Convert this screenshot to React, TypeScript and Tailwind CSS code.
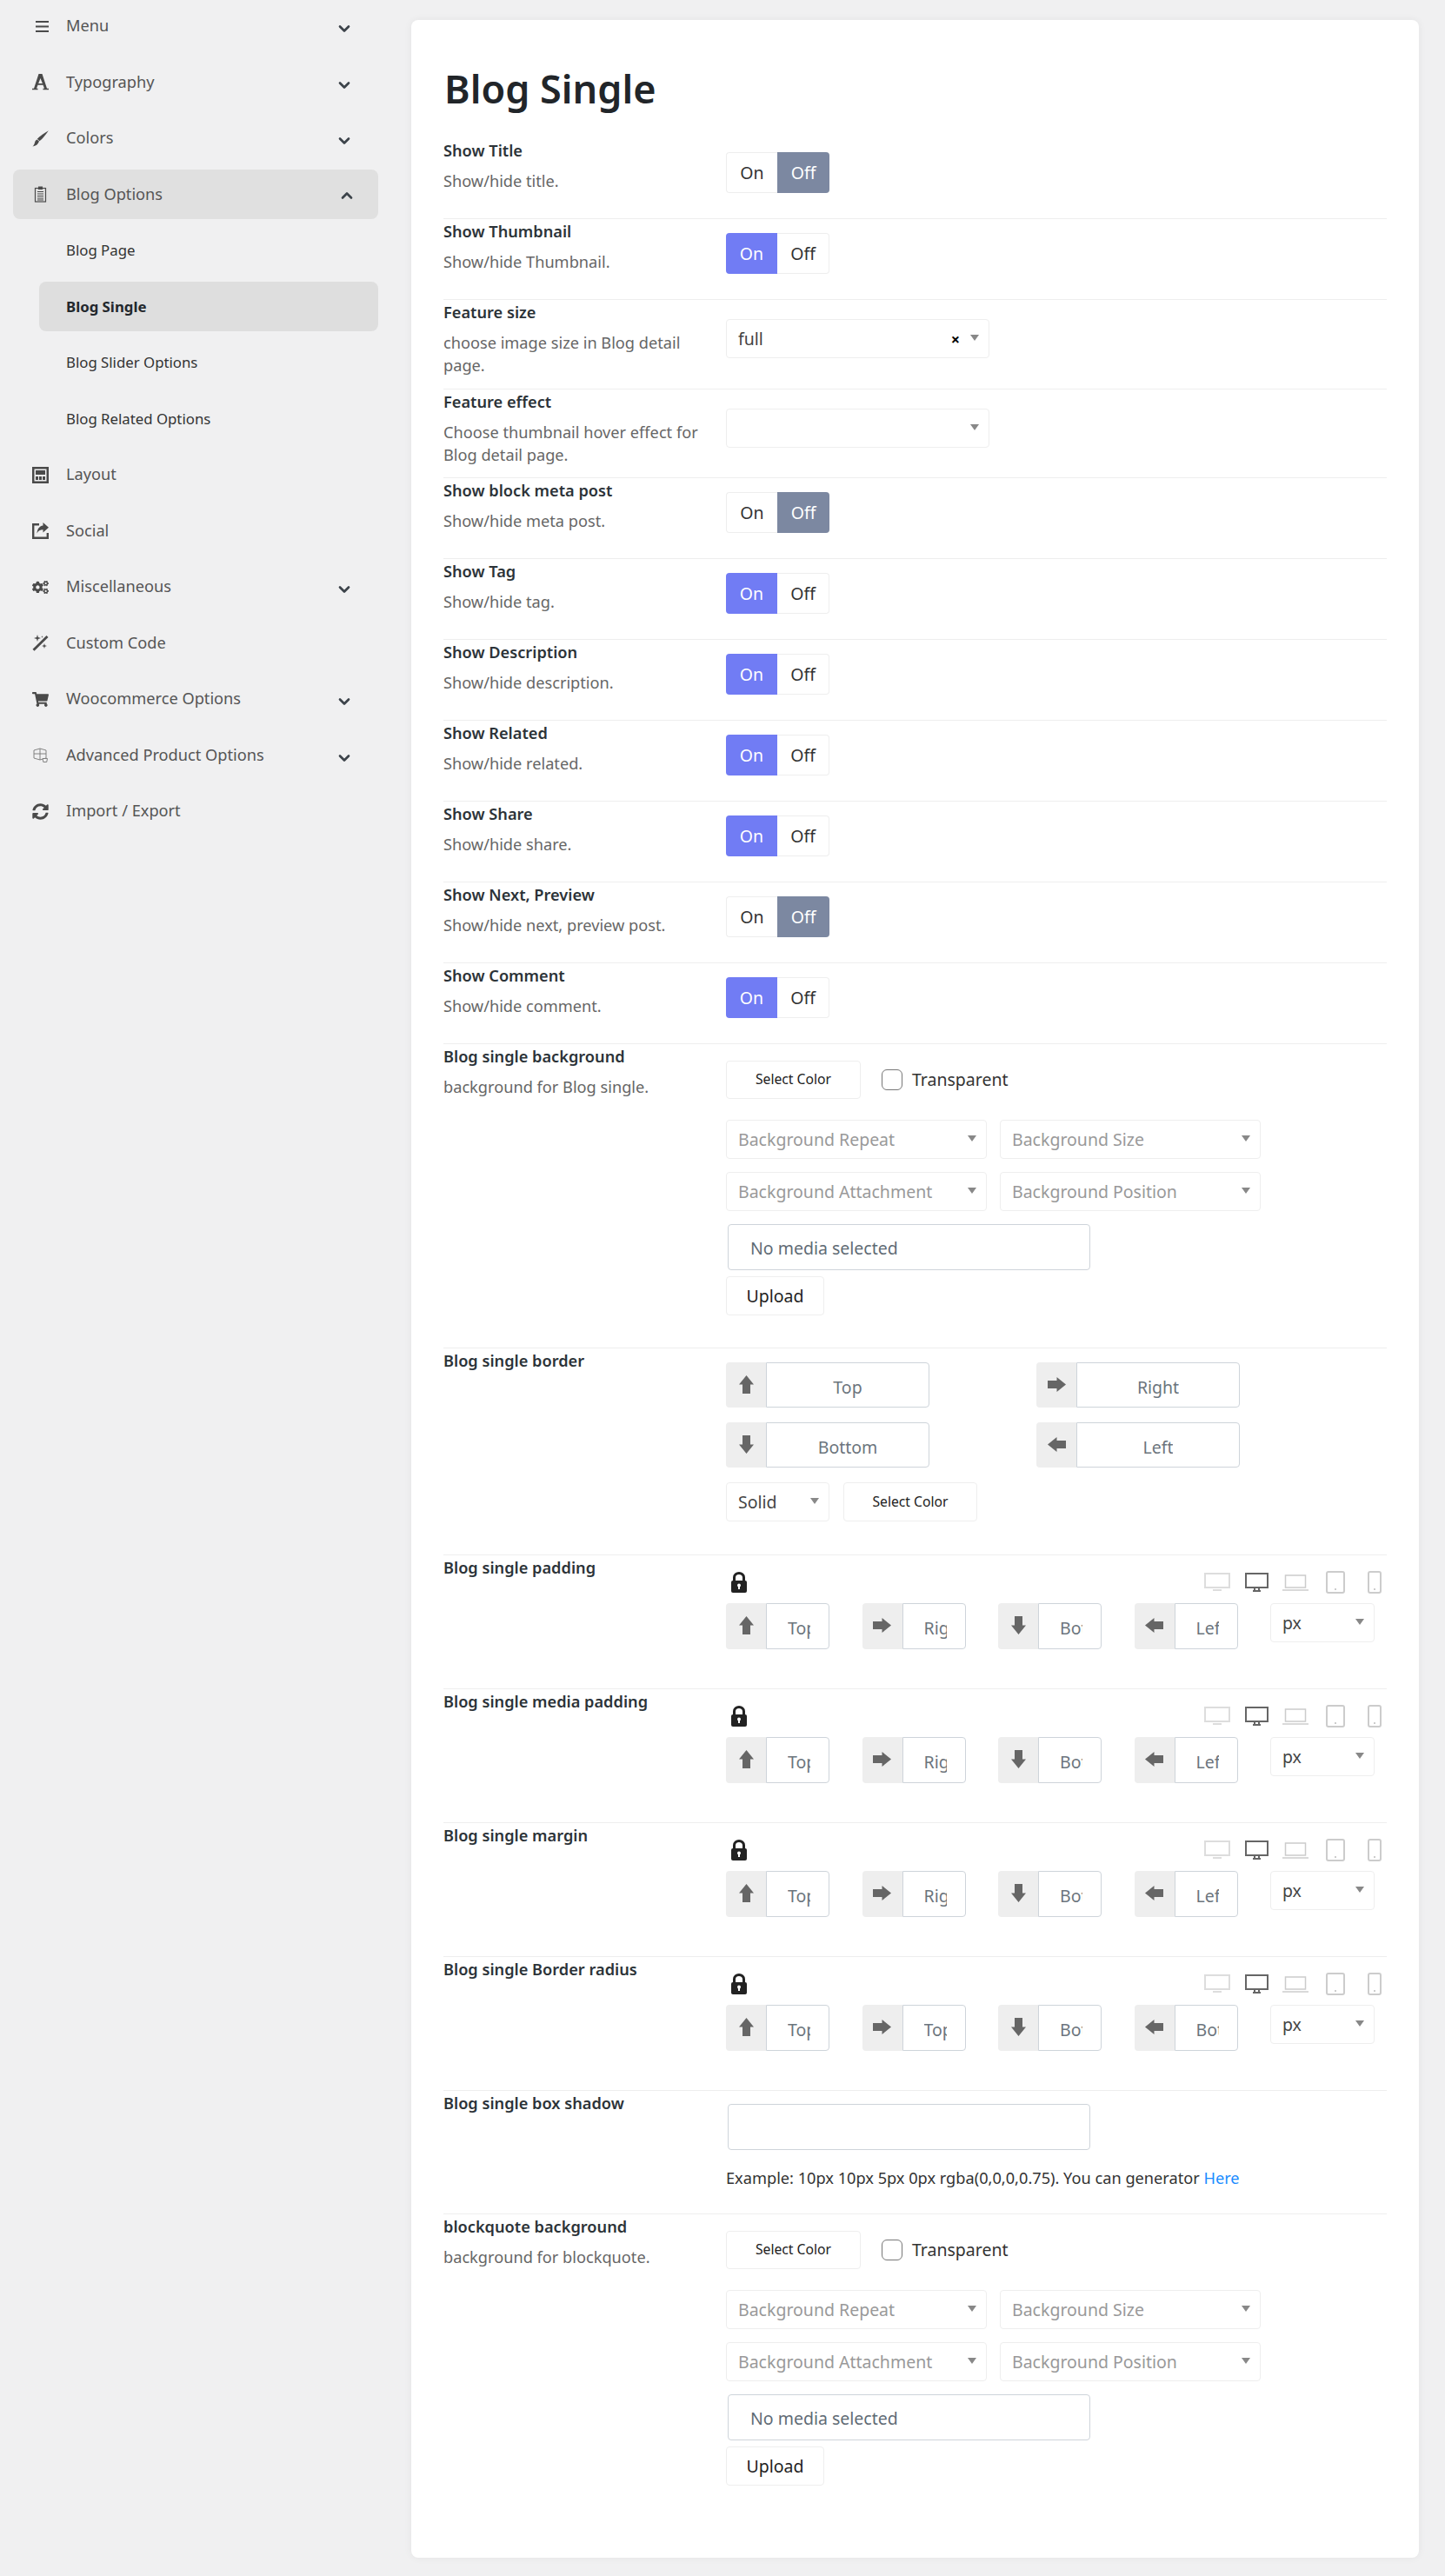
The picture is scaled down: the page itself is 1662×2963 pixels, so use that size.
import { ChevronDown, ChevronUp } from "lucide-react";
import { FaCogs, FaShoppingCart, FaSyncAlt } from "react-icons/fa";

const iconClass = "h-[19px] w-[19px] text-[#4a4a4a]";

const BarsIcon = () => (
  <svg viewBox="0 0 19 19" className={iconClass} fill="currentColor">
    <rect x="4" y="3" width="16" height="2" />
    <rect x="4" y="8.5" width="16" height="2" />
    <rect x="4" y="14" width="16" height="2" />
  </svg>
);

const FontIcon = () => (
  <svg viewBox="0 0 19 19" className={iconClass} fill="currentColor">
    <path
      fillRule="evenodd"
      d="M7.500 0h4L17 16.800h2v1.400h-6.500v-1.400h1.500l-1.500-4H6.500l-1.500 4h1.500v1.400H0v-1.400h2zM9.500 5 7.200 10.900h4.700z"
    />
  </svg>
);

const BrushIcon = () => (
  <svg viewBox="0 0 19 19" className={iconClass} fill="currentColor">
    <path d="M18.800.2C15.500 5 12 9.500 8.500 12.300L5.800 9.800C9 6.500 14 3 18.800.2z" />
    <path d="M5.500 10.500l2.500 2C7 16 4 18 .5 18.500 2 17 2.500 15.500 3 14c.3-2 1.500-3 2.500-3.500z" />
  </svg>
);

const ClipboardIcon = () => (
  <svg viewBox="0 0 19 19" className={iconClass} fill="none" stroke="currentColor">
    <rect x="3.500" y="2.500" width="12" height="15.500" strokeWidth="1.200" />
    <rect x="7" y="0.500" width="5" height="3.500" fill="currentColor" stroke="none" />
    <path d="M6 6.500h7M6 9h7M6 11.500h7M6 14h7M6 16h7" strokeWidth="1.100" />
  </svg>
);

const LayoutIcon = () => (
  <svg viewBox="0 0 19 19" className={iconClass} fill="currentColor">
    <path d="M0 0h19v19H0zM2.500 2.500v14h14v-14z" fillRule="evenodd" />
    <rect x="4" y="4" width="11" height="5" />
    <rect x="4" y="11" width="3" height="4" />
    <rect x="8" y="11" width="3" height="4" />
    <rect x="12" y="11" width="3" height="4" />
  </svg>
);

const ShareIcon = () => (
  <svg viewBox="0 0 19 19" className={iconClass} fill="currentColor">
    <path d="M0 1h8v2.400H2.400v13.200h14.200V12H19v7H0z" />
    <path d="M12.500 0 19 5.800l-6.500 5.800V8.200c-3.300 0-5.600 1.200-7 4.300C5.800 8 8 4.200 12.500 3.600z" />
  </svg>
);

const WandIcon = () => (
  <svg viewBox="0 0 19 19" className={iconClass} fill="currentColor">
    <path d="M16.500 1 18.500 3 2.500 18.800.5 16.800z" />
    <path d="M6 0l.9 3.100L10 4l-3.100.9L6 8l-.9-3.100L2 4l3.100-.9zM14 10l.7 2.300L17 13l-2.300.7L14 16l-.7-2.300L11 13l2.300-.7zM11.500 1l.3 1.200L13 2.500l-1.200.3-.3 1.200-.3-1.200L10 2.500l1.200-.3z" />
  </svg>
);

const BoxIcon = () => (
  <svg viewBox="0 0 19 19" className={iconClass} fill="none" stroke="#777" strokeWidth="0.9">
    <path d="M2 4 9 2l7 2v9l-7 2-7-2zM2 8h14M9 2v13" />
    <path d="M12 13.500h5.500l-.8 4h-3.900z" fill="#f0f0f1" />
  </svg>
);

const LockIcon = () => (
  <svg viewBox="0 0 18 24" className="ml-[6px] h-[24px] w-[18px]">
    <path d="M3.500 11V6.500a5.500 5 0 0 1 11 0V11" fill="none" stroke="#222" strokeWidth="3" />
    <rect y="10" width="18" height="14" rx="2" fill="#222" />
    <circle cx="9" cy="15.500" r="2" fill="#fff" />
    <rect x="8" y="16" width="2" height="4" fill="#fff" />
  </svg>
);

const icons: Record<string, React.ReactNode> = {
  Menu: <BarsIcon />,
  Typography: <FontIcon />,
  Colors: <BrushIcon />,
  "Blog Options": <ClipboardIcon />,
  Layout: <LayoutIcon />,
  Social: <ShareIcon />,
  Miscellaneous: <FaCogs className={iconClass} />,
  "Custom Code": <WandIcon />,
  "Woocommerce Options": <FaShoppingCart className={iconClass} />,
  "Advanced Product Options": <BoxIcon />,
  "Import / Export": <FaSyncAlt className={iconClass} />,
};

const menu = [
  { name: "Menu", arrow: true },
  { name: "Typography", arrow: true },
  { name: "Colors", arrow: true },
  { name: "Blog Options", open: true },
  { name: "Layout" },
  { name: "Social" },
  { name: "Miscellaneous", arrow: true },
  { name: "Custom Code" },
  { name: "Woocommerce Options", arrow: true },
  { name: "Advanced Product Options", arrow: true },
  { name: "Import / Export" },
];

const subMenu = ["Blog Page", "Blog Single", "Blog Slider Options", "Blog Related Options"];

const Sidebar = () => (
  <aside className="w-[473px] shrink-0 pl-[15px] pr-[38px] pt-[1.5px] text-[18.2px] text-[#555]">
    <div className="flex flex-col gap-[7.5px]">
      {menu.map((m) => (
        <div key={m.name} className="flex flex-col gap-[7.5px]">
          <div className={`flex h-[57px] items-center rounded-lg pl-[22px] ${m.open ? "bg-[#e0e0e0]" : ""}`}>
            <span className="w-[39px]">{icons[m.name]}</span>
            <span className="flex-1">{m.name}</span>
            {m.arrow && <ChevronDown className="mr-[29px] mt-[6px] h-[20px] w-[20px] text-[#3c434a]" strokeWidth={3.2} />}
            {m.open && <ChevronUp className="mr-[26px] mt-[3px] h-[20px] w-[20px] text-[#3c434a]" strokeWidth={3.2} />}
          </div>
          {m.open &&
            subMenu.map((s) => (
              <div
                key={s}
                className={`ml-[30px] flex h-[57px] items-center rounded-lg pl-[31px] text-[16.8px] ${s === "Blog Single" ? "bg-[#dedede] font-bold text-[#23282d]" : "text-[#333]"}`}
              >
                {s}
              </div>
            ))}
        </div>
      ))}
    </div>
  </aside>
);

const Caret = () => <span className="-mt-[3px] h-0 w-0 shrink-0 border-x-[5.5px] border-t-[7px] border-x-transparent border-t-[#888]" />;

const Toggle = ({ on }: { on: boolean }) => (
  <div className="flex h-[47px] w-[119px] text-[19.5px]">
    <div className={`flex w-[59px] items-center justify-center rounded-l ${on ? "bg-[#717cf4] text-white" : "border border-r-0 border-[#eee] bg-white text-[#333]"}`}>On</div>
    <div className={`flex w-[60px] items-center justify-center rounded-r ${on ? "border border-l-0 border-[#eee] bg-white text-[#333]" : "bg-[#7c88a1] text-white"}`}>Off</div>
  </div>
);

const Select = ({ value, placeholder, width, clear }: { value?: string; placeholder?: string; width: string; clear?: boolean }) => (
  <div className={`flex h-[45px] items-center rounded border border-[#eee] bg-white pl-[13px] pr-[11px] text-[19.5px] ${width}`}>
    <span className={`flex-1 whitespace-nowrap ${placeholder ? "text-[#999]" : "text-[#444]"}`}>{value || placeholder}</span>
    {clear && <span className="mr-[12px] text-[18px] font-bold leading-none text-black">×</span>}
    <Caret />
  </div>
);

const Button = ({ children, className }: { children: React.ReactNode; className: string }) => (
  <div className={`flex items-center justify-center rounded border border-[#eee] bg-white text-[#222] ${className}`}>{children}</div>
);

const Row = ({ title, desc, last, children }: { title: string; desc?: string; last?: boolean; children: React.ReactNode }) => (
  <div className={`flex ${last ? "" : "border-b border-[#eee]"}`}>
    <div className="w-[325px] shrink-0 pb-[13px] pr-[10px] pt-[2px]">
      <div className="text-[18.2px] font-semibold leading-[24px] text-[#2c3338]">{title}</div>
      {desc && <div className="mt-[11px] text-[18.2px] leading-[25.5px] text-[#666]">{desc}</div>}
    </div>
    <div className="min-w-0 flex-1">{children}</div>
  </div>
);

const ToggleRow = ({ title, desc, on }: { title: string; desc: string; on: boolean }) => (
  <Row title={title} desc={desc}>
    <div className="pb-[29px] pt-[16px]">
      <Toggle on={on} />
    </div>
  </Row>
);

const Background = ({ title, desc, last }: { title: string; desc: string; last?: boolean }) => (
  <Row title={title} desc={desc} last={last}>
    <div className="pt-[19px]">
      <div className="flex items-center">
        <Button className="h-[44px] w-[155px] text-[15.7px]">Select Color</Button>
        <span className="ml-[24px] h-[24px] w-[24px] rounded-md border border-[#777] bg-white" />
        <span className="ml-[11px] text-[19.5px] text-[#333]">Transparent</span>
      </div>
      <div className="mt-[24px] grid w-[615px] grid-cols-[300px_300px] gap-x-[15px] gap-y-[15px]">
        <Select placeholder="Background Repeat" width="w-[300px]" />
        <Select placeholder="Background Size" width="w-[300px]" />
        <Select placeholder="Background Attachment" width="w-[300px]" />
        <Select placeholder="Background Position" width="w-[300px]" />
      </div>
      <div className="ml-[2px] mt-[15px] flex h-[53px] w-[417px] items-center rounded border border-[#ced4da] bg-white pl-[25px] pt-[2px] text-[19.5px] text-[#5f6b75]">No media selected</div>
      <Button className="mt-[7px] h-[45px] w-[113px] text-[19.5px]">Upload</Button>
      <div className="h-[37px]" />
    </div>
  </Row>
);

const Arrow = ({ dir }: { dir: "up" | "down" | "left" | "right" }) => {
  const rotate = { up: "rotate-0", right: "rotate-90", down: "rotate-180", left: "-rotate-90" }[dir];
  return (
    <svg viewBox="0 0 17 21" className={`h-[21px] w-[17px] ${rotate}`} fill="#666">
      <path d="M8.500 0 17 10.500H13V21H4V10.500H0Z" />
    </svg>
  );
};

const Group = ({ dir, label, className, text }: { dir: "up" | "down" | "left" | "right"; label: string; className: string; text: string }) => (
  <div className={`flex shrink-0 ${className}`}>
    <div className="flex w-[46px] shrink-0 items-center justify-center rounded-l bg-[#eee] pb-[2px]">
      <Arrow dir={dir} />
    </div>
    <div className={`flex min-w-0 flex-1 items-center overflow-hidden rounded-r border border-[#ced4da] bg-white pt-[5px] text-[19.5px] text-[#6c757d] ${text}`}>
      <span className="overflow-hidden whitespace-nowrap">{label}</span>
    </div>
  </div>
);

const Devices = () => (
  <div className="flex items-start pr-[6px]">
    <svg viewBox="0 0 30 21" className="mt-[1px] h-[21px] w-[30px]" fill="none" stroke="#ddd" strokeWidth="2">
      <rect x="1" y="1" width="28" height="16" />
      <path d="M10 20h10" />
    </svg>
    <svg viewBox="0 0 27 22" className="ml-[17px] mt-[1px] h-[22px] w-[27px]" fill="none" stroke="#666" strokeWidth="2">
      <rect x="1" y="1" width="25" height="16" />
      <path d="M9 21h9M11 17v4M16 17v4" />
    </svg>
    <svg viewBox="0 0 30 19" className="ml-[16px] mt-[3px] h-[19px] w-[30px]" fill="none" stroke="#ccc" strokeWidth="1.500">
      <rect x="3.500" y="1" width="23" height="14" />
      <path d="M0 18h30" />
    </svg>
    <svg viewBox="0 0 22 26" className="ml-[20px] -mt-[1px] h-[26px] w-[22px]" fill="none" stroke="#ccc" strokeWidth="2">
      <rect x="1" y="1" width="20" height="24" rx="2" />
      <rect x="10" y="20" width="2" height="2" fill="#ccc" stroke="none" />
    </svg>
    <svg viewBox="0 0 16 26" className="ml-[26px] -mt-[1px] h-[26px] w-[16px]" fill="none" stroke="#ccc" strokeWidth="2">
      <rect x="1" y="1" width="14" height="24" rx="2" />
      <rect x="7" y="20" width="2" height="2" fill="#ccc" stroke="none" />
    </svg>
  </div>
);

const Spacing = ({ title, labels }: { title: string; labels: string[] }) => (
  <Row title={title}>
    <div className="pb-[45px] pt-[19px]">
      <div className="flex h-[36px] items-start justify-between">
        <LockIcon />
        <Devices />
      </div>
      <div className="flex gap-[37.5px]">
        <Group dir="up" label={labels[0]} className="h-[53px] w-[119px]" text="pl-[24px] pr-[21px]" />
        <Group dir="right" label={labels[1]} className="h-[53px] w-[119px]" text="pl-[24px] pr-[21px]" />
        <Group dir="down" label={labels[2]} className="h-[53px] w-[119px]" text="pl-[24px] pr-[21px]" />
        <Group dir="left" label={labels[3]} className="h-[53px] w-[119px]" text="pl-[24px] pr-[21px]" />
        <Select value="px" width="w-[120px]" />
      </div>
    </div>
  </Row>
);

export default function App() {
  return (
    <div className="flex min-h-[2963px] bg-[#f0f0f1] font-['Noto_Sans',sans-serif]">
      <Sidebar />
      <main className="mb-[21px] mt-[23px] w-[1159px] rounded-lg bg-white px-[37px] shadow-[0_0_10px_rgba(0,0,0,0.06)]">
        <h1 className="pb-[25px] pl-[1px] pt-[47px] text-[45px] font-semibold leading-[64px] text-[#212529]">Blog Single</h1>
        <ToggleRow title="Show Title" desc="Show/hide title." on={false} />
        <ToggleRow title="Show Thumbnail" desc="Show/hide Thumbnail." on />
        <Row title="Feature size" desc="choose image size in Blog detail page.">
          <div className="pb-[35px] pt-[22px]">
            <Select value="full" width="w-[303px]" clear />
          </div>
        </Row>
        <Row title="Feature effect" desc="Choose thumbnail hover effect for Blog detail page.">
          <div className="pt-[22px]">
            <Select width="w-[303px]" />
          </div>
        </Row>
        <ToggleRow title="Show block meta post" desc="Show/hide meta post." on={false} />
        <ToggleRow title="Show Tag" desc="Show/hide tag." on />
        <ToggleRow title="Show Description" desc="Show/hide description." on />
        <ToggleRow title="Show Related" desc="Show/hide related." on />
        <ToggleRow title="Show Share" desc="Show/hide share." on />
        <ToggleRow title="Show Next, Preview" desc="Show/hide next, preview post." on={false} />
        <ToggleRow title="Show Comment" desc="Show/hide comment." on />
        <Background title="Blog single background" desc="background for Blog single." />
        <Row title="Blog single border">
          <div className="pb-[38px] pt-[16px]">
            <div className="grid grid-cols-[234px_234px] gap-x-[123px] gap-y-[17px]">
              <Group dir="up" label="Top" className="h-[52px] w-[234px]" text="justify-center" />
              <Group dir="right" label="Right" className="h-[52px] w-[234px]" text="justify-center" />
              <Group dir="down" label="Bottom" className="h-[52px] w-[234px]" text="justify-center" />
              <Group dir="left" label="Left" className="h-[52px] w-[234px]" text="justify-center" />
            </div>
            <div className="mt-[17px] flex gap-[16px]">
              <Select value="Solid" width="w-[119px]" />
              <Button className="h-[45px] w-[154px] text-[15.7px]">Select Color</Button>
            </div>
          </div>
        </Row>
        <Spacing title="Blog single padding" labels={["Top", "Right", "Bottom", "Left"]} />
        <Spacing title="Blog single media padding" labels={["Top", "Right", "Bottom", "Left"]} />
        <Spacing title="Blog single margin" labels={["Top", "Right", "Bottom", "Left"]} />
        <Spacing title="Blog single Border radius" labels={["Top", "Top", "Bottom", "Bottom"]} />
        <Row title="Blog single box shadow">
          <div className="pb-[28px] pt-[15px]">
            <div className="ml-[2px] h-[53px] w-[417px] rounded border border-[#ced4da] bg-white" />
            <p className="mt-[19px] whitespace-nowrap text-[18.2px] leading-[26px] text-[#333]">
              Example: 10px 10px 5px 0px rgba(0,0,0,0.75). You can generator <a className="text-[#1a8cff]">Here</a>
            </p>
          </div>
        </Row>
        <Background title="blockquote background" desc="background for blockquote." last />
      </main>
    </div>
  );
}
